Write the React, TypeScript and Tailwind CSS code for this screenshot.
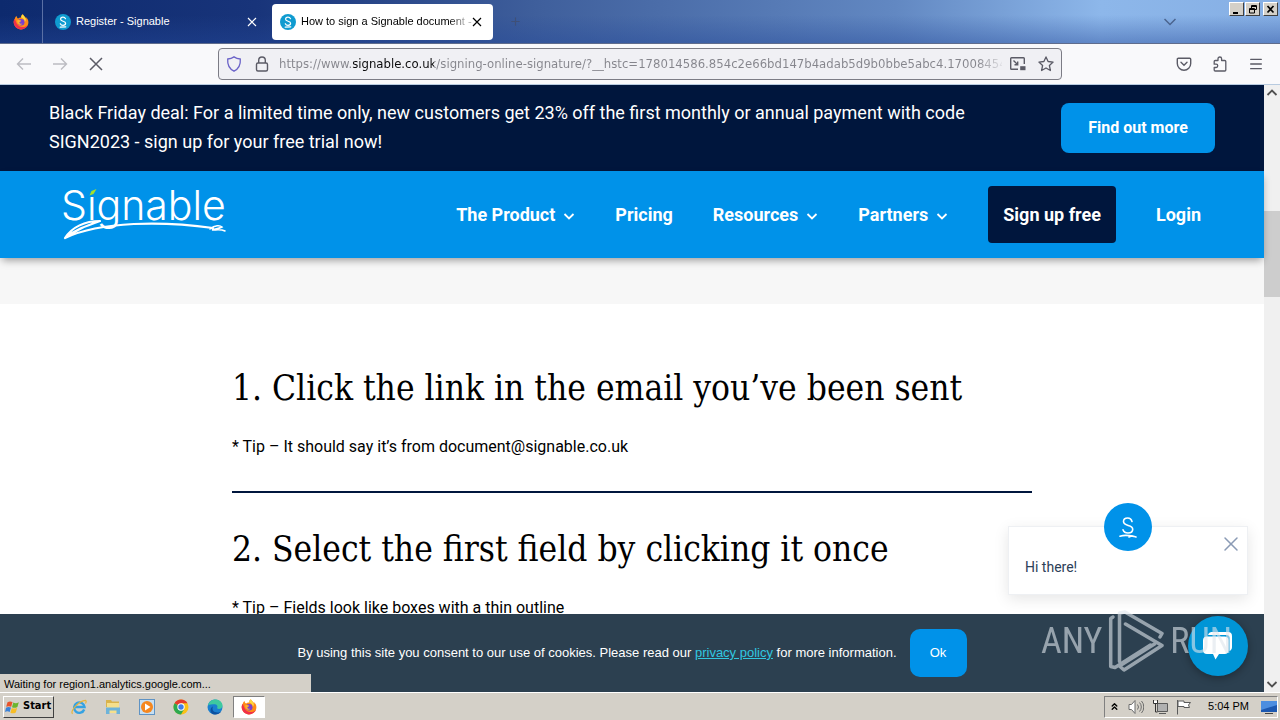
import { ChevronsUp, Menu, Plus, X } from "lucide-react";
import type { ReactNode } from "react";

const uiFont = "font-['DejaVu_Sans_Condensed','DejaVu_Sans',sans-serif]";
const smallFont = "font-['Liberation_Sans',sans-serif]";

const url =
  "https://www.signable.co.uk/signing-online-signature/?__hstc=178014586.854c2e66bd147b4adab5d9b0bbe5abc4.1700845475";

function Chevron({ className = "" }: { className?: string }) {
  return (
    <svg viewBox="0 0 12 12" className={`size-3 ${className}`} fill="none" stroke="currentColor" strokeWidth="1.800">
      <path d="M1.500 4L6 8.500 10.500 4" />
    </svg>
  );
}

function TabClose() {
  return (
    <button aria-label="Close tab">
      <svg viewBox="0 0 10 10" className="size-2.5" stroke="currentColor" strokeWidth="1.200">
        <path d="M1 1l8 8M9 1L1 9" />
      </svg>
    </button>
  );
}

function FirefoxIcon() {
  return (
    <svg viewBox="0 0 16 16" className="size-4">
      <path d="M14.8 5.6c-.4-1-1.200-2-1.800-2.300.2.600.4 1.100.4 1.500C12.500 2.900 10.700 2 9.800.3c-1.300.9-1.800 2.200-1.600 3.300-1.300-.1-2.300.3-3 .9C4.300 4.200 3.600 3.200 3.700 2 2.500 2.700 2 3.900 1.800 4.700.8 6 .6 7.300.7 8.600c.4 4 3.500 6.800 7.300 6.800 4.300 0 7.400-3.300 7.400-7.100 0-1-.2-1.900-.6-2.700z" fill="#ff8a16" />
      <path d="M.7 8.600c.4 4 3.500 6.800 7.300 6.800 3.400 0 6-2 7-4.900-1.600 2-3.700 2.800-6 2.500C5 12.600 3.500 9.500 1.800 4.700.8 6 .6 7.300.7 8.600z" fill="#f0304a" />
      <path d="M9.800.3c-1.300.9-1.800 2.200-1.600 3.300 2 .6 3.400 2.200 3.500 4.400 1-.8 1.200-2 1.100-3.200C12 3 10.500 1.600 9.800.3z" fill="#ffd83c" />
      <circle cx="8.200" cy="8.300" r="3.300" fill="#7a3fd0" />
      <path d="M4.400 6.300c1.300-.6 2.900-.3 3.800.4-.3 1-1.500 1-1.900 1.700.2.900 1.500 1.700 3.200 1-.9 1.300-2.500 1.700-3.700 1-1.300-.8-1.900-2.400-1.400-4.100z" fill="#ffb02a" />
    </svg>
  );
}

function SignableBadge() {
  return (
    <svg viewBox="0 0 16 16" className="mr-[5px] size-4 shrink-0">
      <circle cx="8" cy="8" r="8" fill="#0f9bd0" />
      <path d="M10.500 4.700C9.900 3.500 8.900 3.200 8 3.200c-1.300 0-2.400.8-2.400 2 0 2.700 5 1.400 5 4.100 0 1.300-1.200 2-2.600 2-1.200 0-2.200-.5-2.700-1.600M5.200 13.200l5.600-.3" fill="none" stroke="#fff" strokeWidth="1.200" strokeLinecap="round" />
    </svg>
  );
}

function TitleBar() {
  return (
    <header className="relative flex h-11 items-stretch border-b border-[#5f6c8c] bg-[linear-gradient(to_bottom,transparent_35%,#2448986b),linear-gradient(to_right,#0d2a6e,#18347a_20%,#3f5f9c_42%,#6288c2_70%,#8db7ea_86%,#86afe4)]">
      <button aria-label="Firefox View" className="flex w-[43px] items-center justify-center border-r border-[#5a70a5]">
        <FirefoxIcon />
      </button>
      <div className="flex flex-1 items-center gap-2 pl-2">
        <div className="flex h-9 w-[213px] items-center pr-[7px] pl-1 text-white">
          <SignableBadge />
          <button className={`flex-1 text-left text-[11px] whitespace-nowrap ${smallFont}`}>Register - Signable</button>
          <TabClose />
        </div>
        <div className="flex h-9 w-[221px] items-center rounded-sm bg-white pr-[11px] pl-2 text-black">
          <SignableBadge />
          <button className={`flex-1 bg-[linear-gradient(to_right,#000_148px,#0000004d_164px)] bg-clip-text text-left text-[11px] whitespace-nowrap text-transparent ${smallFont}`}>
            How to sign a Signable document -
          </button>
          <TabClose />
        </div>
        <button aria-label="New tab" className="pl-2 text-[#3f5078]">
          <Plus size={13} strokeWidth={2} />
        </button>
      </div>
      <button aria-label="List all tabs" className="mr-[53px] text-[#4a648f]">
        <svg viewBox="0 0 12 12" className="size-3" fill="none" stroke="currentColor" strokeWidth="1.500">
          <path d="M.5 3L6 8.500 11.500 3" />
        </svg>
      </button>
      <div className="flex h-[14px] gap-px pt-0.5 pr-0.5">
        <WindowButton label="Minimize">
          <path d="M3 9h5v2H3z" fill="#000" />
        </WindowButton>
        <WindowButton label="Restore">
          <path d="M5.500 2.500h5v4h-5zM5.500 3.500h5M3.500 5.500h5v4.500h-5zM3.500 6.500h5" fill="#d4d0c8" stroke="#000" />
        </WindowButton>
        <WindowButton label="Close">
          <path d="M3.500 3l6 6.500M9.500 3l-6 6.500" stroke="#000" strokeWidth="1.700" />
        </WindowButton>
      </div>
    </header>
  );
}

function WindowButton({ label, children }: { label: string; children: ReactNode }) {
  return (
    <button
      aria-label={label}
      className="flex h-[14px] w-[15px] items-center justify-center border border-t-white border-r-[#404040] border-b-[#404040] border-l-white bg-[#d4d0c8] last:ml-0.5"
    >
      <svg viewBox="0 0 13 12" className="h-3 w-[13px]">
        {children}
      </svg>
    </button>
  );
}

function Toolbar() {
  return (
    <div className="flex h-[41px] items-center border-b border-[#b8cbe0] bg-[#f9f9fb] text-[#5b5b66]">
      <div className="flex w-[218px] items-center gap-5 pl-4">
        <button aria-label="Back" className="text-[#bcbcc2]">
          <svg viewBox="0 0 16 16" className="size-4" fill="none" stroke="currentColor" strokeWidth="1.400">
            <path d="M15 8H1.500M7 2.500L1.500 8 7 13.500" />
          </svg>
        </button>
        <button aria-label="Forward" className="text-[#bcbcc2]">
          <svg viewBox="0 0 16 16" className="size-4" fill="none" stroke="currentColor" strokeWidth="1.400">
            <path d="M1 8h13.500M9 2.500L14.500 8 9 13.500" />
          </svg>
        </button>
        <button aria-label="Stop">
          <svg viewBox="0 0 16 16" className="size-4" fill="none" stroke="currentColor" strokeWidth="1.500">
            <path d="M2 2l12 12M14 2L2 14" />
          </svg>
        </button>
      </div>
      <div className="flex h-8 flex-1 items-center rounded-sm border border-[#7c7c85] bg-[#f0f0f4] px-[7px]">
        <svg viewBox="0 0 16 16" className="mr-3 size-4 shrink-0" fill="none" stroke="#6a62c8" strokeWidth="1.300">
          <path d="M8 .9C6.200 2.200 4 2.900 1.700 3c-.4 5 1.600 9.800 6.300 12.200C12.700 12.800 14.700 8 14.300 3 12 2.900 9.800 2.200 8 .9z" />
        </svg>
        <svg viewBox="0 0 16 16" className="mr-[9px] size-4 shrink-0" fill="none" stroke="currentColor" strokeWidth="1.400">
          <rect x="2.500" y="7" width="11" height="8" rx="1.500" />
          <path d="M4.700 7V4.300a3.300 3.300 0 0 1 6.600 0V7" />
        </svg>
        <input
          aria-label="Address"
          defaultValue={url}
          className={`min-w-0 flex-1 bg-[linear-gradient(to_right,#85858c_74px,#0c0c0d_74px,#0c0c0d_155px,#85858c_155px,#85858c_calc(100%-25px),#85858c20)] bg-clip-text text-[13px] text-transparent outline-none ${uiFont}`}
        />
        <button aria-label="Picture in picture" className="ml-2">
          <svg viewBox="0 0 16 16" className="size-4" fill="none" stroke="currentColor" strokeWidth="1.400">
            <path d="M8 13.300H1.500a.8.800 0 0 1-.8-.8v-10a.8.800 0 0 1 .8-.8h12a.8.800 0 0 1 .8.800V8" />
            <path d="M3.500 4.500l4 4M7.700 5.500v3.200H4.500" />
            <rect x="10.200" y="10.200" width="5.300" height="4" fill="currentColor" stroke="none" />
          </svg>
        </button>
        <button aria-label="Bookmark this page" className="ml-3">
          <svg viewBox="0 0 16 16" className="size-4" fill="none" stroke="currentColor" strokeWidth="1.300" strokeLinejoin="round">
            <path d="M8 .9l2.100 4.600 5 .6-3.700 3.400 1 5L8 12l-4.400 2.500 1-5L.9 6.100l5-.6z" />
          </svg>
        </button>
      </div>
      <div className="flex w-[218px] items-center justify-end gap-5 pr-4">
        <button aria-label="Save to Pocket">
          <svg viewBox="0 0 16 16" className="size-4" fill="none" stroke="currentColor" strokeWidth="1.400" strokeLinecap="round">
            <path d="M2.300 2.200h11.400c.6 0 1 .4 1 1v4.300a6.700 6.700 0 0 1-13.400 0V3.200c0-.6.4-1 1-1zM5 6.300l3 2.900 3-2.900" />
          </svg>
        </button>
        <button aria-label="Extensions">
          <svg viewBox="0 0 16 16" className="size-4" fill="none" stroke="currentColor" strokeWidth="1.300" strokeLinejoin="round">
            <path d="M6 4.500V2.800a1.800 1.800 0 0 1 3.600 0v1.700h3.200c.6 0 1 .4 1 1V14c0 .6-.4 1-1 1H3.200c-.6 0-1-.4-1-1v-2.500h1.900a1.600 1.600 0 0 0 0-3.300H2.200V5.500c0-.6.4-1 1-1z" />
          </svg>
        </button>
        <button aria-label="Open application menu">
          <Menu size={16} strokeWidth={2} />
        </button>
      </div>
    </div>
  );
}

function Logo() {
  return (
    <a href="#home" aria-label="Signable" className="block">
      <svg viewBox="0 0 164 52" className="h-[52px] w-[164px] overflow-visible" fill="none">
        <text x="-2" y="31" fill="#fff" fontSize="41" fontWeight="300" className="font-['Inter',sans-serif]">
          Sıgnable
        </text>
        <path d="M26.500 6.500l2-4.500 5-2-3 5z" fill="#a5e02a" />
        <path d="M2 49c7-11 20-17 35-17-14 5-25 9-35 17C38 32 100 32 150 39" stroke="#fff" strokeWidth="2.200" strokeLinecap="round" strokeLinejoin="round" />
        <path d="M147 40c5-4 10-4 12-2-4 2-8 2-10 3 5 0 9-1 13 1" stroke="#fff" strokeWidth="1.600" strokeLinecap="round" />
      </svg>
    </a>
  );
}

function NavMenu({ label }: { label: string }) {
  return (
    <button className="flex items-center gap-2 font-bold">
      {label}
      <Chevron className="mt-0.5" />
    </button>
  );
}

function SiteHeader() {
  return (
    <div className="relative font-['Roboto',sans-serif] text-lg text-white">
      <div className="flex items-start justify-between bg-[#00163d] px-[49px] pt-[13px] pb-[15px]">
        <p className="max-w-[920px] leading-[29px]">
          Black Friday deal: For a limited time only, new customers get 23% off the first monthly or annual payment with
          code SIGN2023 - sign up for your free trial now!
        </p>
        <a href="#offer" className="mt-[5px] flex h-[50px] w-[154px] items-center justify-center rounded-lg bg-[#0092e9] text-base font-bold">
          Find out more
        </a>
      </div>
      <nav className="flex h-[87px] items-center justify-between bg-[#0092e9] px-[63px] shadow-[0_4px_8px_-2px_#00000066]">
        <Logo />
        <div className="flex items-center gap-10 font-bold">
          <NavMenu label="The Product" />
          <a href="#pricing">Pricing</a>
          <NavMenu label="Resources" />
          <NavMenu label="Partners" />
          <a href="#signup" className="rounded bg-[#00163d] px-[15px] py-[15px] leading-[27px]">
            Sign up free
          </a>
          <a href="#login">Login</a>
        </div>
      </nav>
    </div>
  );
}

function Step({ title, tip }: { title: string; tip: string }) {
  return (
    <section>
      <h2 className="font-['DejaVu_Serif_Condensed','DejaVu_Serif',serif] text-[35px] leading-[48px] whitespace-nowrap">
        {title}
      </h2>
      <p className="mt-[23px] font-['Roboto',sans-serif] text-base leading-6">{tip}</p>
    </section>
  );
}

function CookieBar() {
  return (
    <div className={`relative flex items-center justify-center gap-[13px] bg-[#2c4050] py-[15px] text-[13px] text-white ${smallFont}`}>
      <p>
        By using this site you consent to our use of cookies. Please read our{" "}
        <a href="#privacy" className="text-[#31c8e0] underline">
          privacy policy
        </a>{" "}
        for more information.
      </p>
      <button className="h-12 w-[57px] rounded-[10px] bg-[#0092e9]">Ok</button>
    </div>
  );
}

function ChatWidget() {
  return (
    <>
      <div className="absolute right-4 bottom-[97px] h-[69px] w-[240px] border border-[#eef0f3] bg-white px-4 pt-[30px] font-['Roboto',sans-serif] text-sm text-[#2c4058] shadow-[0_4px_14px_#0000001a]">
        <div className="absolute -top-6 left-[95px] flex size-12 items-center justify-center rounded-full bg-[#0092e9]">
          <svg viewBox="0 0 24 24" className="size-6" fill="none" stroke="#fff" strokeWidth="1.600" strokeLinecap="round">
            <path d="M16 6.500C15.300 4 13.700 3 11.700 3 9.300 3 7.500 4.500 7.500 6.600c0 5 9.200 2.700 9.200 7.600 0 2.300-2 3.800-4.700 3.800-2.400 0-4.200-1-5-3.300M4 21.200c5-1.600 9-1 14 .300M13 22l3-1.200 4 1.200" />
          </svg>
        </div>
        <button aria-label="Dismiss message" className="absolute top-[5px] right-1 text-[#8a9ab5]">
          <X size={24} strokeWidth={1.5} />
        </button>
        <p>Hi there!</p>
      </div>
      <button
        aria-label="Open chat"
        className="absolute right-4 bottom-4 flex size-[60px] items-center justify-center rounded-full bg-[#0095d6] shadow-[0_2px_8px_#00000055]"
      >
        <svg viewBox="0 0 32 32" className="size-8" fill="#fff">
          <path d="M9 2h17a4 4 0 0 1 4 4v11c0 2-1 3.500-2.500 4V8a3 3 0 0 0-3-3H6a4 4 0 0 1 3-3z" />
          <path d="M5 6.500h17.500a4 4 0 0 1 4 4V20a4 4 0 0 1-4 4H17l-3.500 5.500L11 24H5a4 4 0 0 1-4-4v-9.500a4 4 0 0 1 4-4z" />
        </svg>
      </button>
    </>
  );
}

function Watermark() {
  return (
    <div className="pointer-events-none absolute right-8 bottom-5 flex items-center gap-1.5 font-['Roboto_Condensed','Roboto',sans-serif] text-[36px] text-[#dfe6ec] opacity-60">
      <span>ANY</span>
      <svg viewBox="0 0 56 62" className="h-[62px] w-14" fill="none" stroke="currentColor" strokeWidth="3.500" strokeLinejoin="round" strokeLinecap="round">
        <path d="M5 7L2.700 8.500v48l4.300 1L42.500 35" />
        <path d="M11.500 51.500V3l5.500-1 37 21.500-2 3.500" />
        <path d="M17.500 14L54 35.500 16 60l-4.500-4 35-22" />
      </svg>
      <span>RUN</span>
    </div>
  );
}

function Scrollbar() {
  return (
    <div className="flex w-4 shrink-0 flex-col items-center bg-[#f0f0f0] text-[#505050]">
      <Chevron className="mt-[2px] rotate-180" />
      <div className="mt-[112px] h-[86px] w-full bg-[#cdcdcd]" />
      <Chevron className="mt-auto mb-[2px]" />
    </div>
  );
}

function StartButton() {
  return (
    <button className={`flex h-[22px] w-[51px] items-center gap-0.5 border border-t-white border-r-[#404040] border-b-[#404040] border-l-white bg-[#d4d0c8] pl-px text-[11px] font-bold ${uiFont}`}>
      <svg viewBox="0 0 16 16" className="size-4 shrink-0">
        <path d="M2.500 3.200c1.700-1 3.400-1 5-.1L6.200 7.800c-1.600-.9-3.300-.9-5 0z" fill="#e8532a" />
        <path d="M8.300 3.500c1.700.9 3.400.9 5.500-.3l-1.400 4.700c-1.900 1.100-3.700 1.100-5.400.3z" fill="#6cb52d" />
        <path d="M1 8.700c1.700-.9 3.400-.9 5-.1L4.700 13c-1.600-.9-3.300-.9-4.700 0z" fill="#3a82d8" />
        <path d="M6.800 9c1.700.8 3.500.8 5.400-.3l-1.400 4.700c-1.900 1.100-3.700 1.100-5.400.3z" fill="#f7bd26" />
      </svg>
      Start
    </button>
  );
}

function QuickLaunch() {
  return (
    <div className="flex items-center gap-2.5 pl-[17px]">
      <div className="flex items-center gap-[18px]">
        <button aria-label="Internet Explorer">
          <svg viewBox="0 0 16 16" className="size-4" fill="none">
            <path d="M13.200 10.500A5.200 5.200 0 1 1 13.500 8H4" stroke="#35a2e2" strokeWidth="2.400" />
            <path d="M1.500 14.800C-1 12 8 1.500 14.500 1.300c1 .4.800 2 0 3.200" stroke="#e8b53a" strokeWidth="1.200" />
          </svg>
        </button>
        <button aria-label="Windows Explorer">
          <svg viewBox="0 0 16 16" className="size-4">
            <path d="M1 1h5l1 1.500h7V8H1z" fill="#d9b34c" />
            <path d="M2 4h12v10H2z" fill="#f5df8c" />
            <path d="M1 8.500h14v6.500h-3.500v-3.500h-7V15H1z" fill="#6db3da" />
          </svg>
        </button>
        <button aria-label="Media Player">
          <svg viewBox="0 0 16 16" className="size-4">
            <rect x=".500" y=".500" width="15" height="15" fill="#c7dff2" stroke="#5f93c4" />
            <circle cx="8" cy="8" r="6" fill="#f5871f" />
            <path d="M6 4.500v7L11.500 8z" fill="#fff" />
          </svg>
        </button>
        <button aria-label="Chrome">
          <svg viewBox="0 0 16 16" className="size-4">
            <circle cx="8" cy="8" r="7.500" fill="#fbc116" />
            <path d="M8 8L1.500 4.250A7.500 7.500 0 0 1 14.500 4.250H8z" fill="#e33b2e" />
            <path d="M8 8L1.500 4.250A7.500 7.500 0 0 0 8 15.500l3.200-5.600z" fill="#2da94f" />
            <circle cx="8" cy="8" r="3.700" fill="#fff" />
            <circle cx="8" cy="8" r="2.700" fill="#3f7de8" />
          </svg>
        </button>
        <button aria-label="Edge">
          <svg viewBox="0 0 16 16" className="size-4">
            <circle cx="8" cy="8" r="7.500" fill="#1a7fd0" />
            <path d="M1 6.500C2 2.500 5 .5 8.300.5c4 0 7.200 2.700 7.200 6 0 2.200-1.600 3.500-3.500 3.500-1.500 0-2.300-.6-1.700-1.400.7-1.200-.3-3.300-2.800-3.300C5 5.300 2.500 5.500 1 6.500z" fill="#3ec9a0" />
            <path d="M6 7.500c-1.500 3 .5 6 4.500 6 1.500 0 2.800-.4 3.800-1.300-1.400 2.200-3.600 3.300-6.300 3.300-3 0-4.500-2-4.500-4C3.500 9.500 4.500 8 6 7.500z" fill="#0c50a0" />
          </svg>
        </button>
      </div>
      <button aria-label="Firefox" className="flex h-[22px] w-8 items-center justify-center border border-[#808080] border-r-white border-b-white bg-white">
        <FirefoxIcon />
      </button>
    </div>
  );
}

function Taskbar() {
  return (
    <footer className="flex h-7 items-center justify-between border-t border-white bg-[#d4d0c8] pr-0.5 pl-[3px]">
      <div className="flex items-center">
        <StartButton />
        <QuickLaunch />
      </div>
      <div className={`flex h-[22px] items-center border border-t-[#808080] border-r-white border-b-white border-l-[#808080] pl-1 text-[11px] ${smallFont}`}>
        <ChevronsUp size={11} strokeWidth={3} />
        <svg viewBox="0 0 16 16" className="ml-2 size-4" fill="none" stroke="#6c6c6c">
          <path d="M1 5.500h2.500l3.500-4v13l-3.500-4H1z" fill="#fff" />
          <path d="M9.500 5.500a4 4 0 0 1 0 5M11.500 3.500a6.500 6.500 0 0 1 0 9M13.500 2a9 9 0 0 1 0 12" />
        </svg>
        <svg viewBox="0 0 16 16" className="ml-2 size-4" fill="none" stroke="#5a5a5a">
          <path d="M5.500 4.500h10v8h-10zM7 14.500h7" fill="#b0b0b0" />
          <path d="M1.500 1v3.500h4V1M3.500 4.500V13h2" stroke="#333" />
          <path d="M2 2h3v2H2z" fill="#fff" stroke="none" />
        </svg>
        <svg viewBox="0 0 16 16" className="ml-2 size-4" fill="#fff" stroke="#5a5a5a">
          <path d="M1.500 1v14.500M2 2h6v1.500h6.500L12.500 6l1 2.500H8V7.500H2z" />
        </svg>
        <time className="ml-4">5:04 PM</time>
        <svg viewBox="0 0 16 16" className="ml-3 size-4">
          <path d="M0 2h16v11H0z" fill="#1c58b0" />
          <path d="M0 2h16v4L0 11z" fill="#4c8ee0" />
          <path d="M4 14h8v1H4z" fill="#444" />
        </svg>
      </div>
    </footer>
  );
}

export default function App() {
  return (
    <div className="flex h-screen flex-col overflow-hidden bg-white text-black">
      <TitleBar />
      <Toolbar />
      <div className="flex min-h-0 flex-1">
        <div className="relative flex min-w-0 flex-1 flex-col">
          <SiteHeader />
          <div className="h-[46px] shrink-0 bg-[#f7f7f7]" />
          <main className="min-h-0 flex-1 overflow-hidden pt-[60px]">
            <div className="mx-auto max-w-[800px]">
              <Step title="1. Click the link in the email you’ve been sent" tip="* Tip – It should say it’s from document@signable.co.uk" />
              <hr className="mt-8 mb-8 border-t-2 border-[#00163d]" />
              <Step title="2. Select the first field by clicking it once" tip="* Tip – Fields look like boxes with a thin outline" />
            </div>
          </main>
          <CookieBar />
          <div className={`absolute bottom-0 left-0 h-[18px] w-[311px] bg-[#d4d0c8] pl-1 text-[11px] leading-5 ${smallFont}`}>
            Waiting for region1.analytics.google.com...
          </div>
          <ChatWidget />
          <Watermark />
        </div>
        <Scrollbar />
      </div>
      <Taskbar />
    </div>
  );
}
